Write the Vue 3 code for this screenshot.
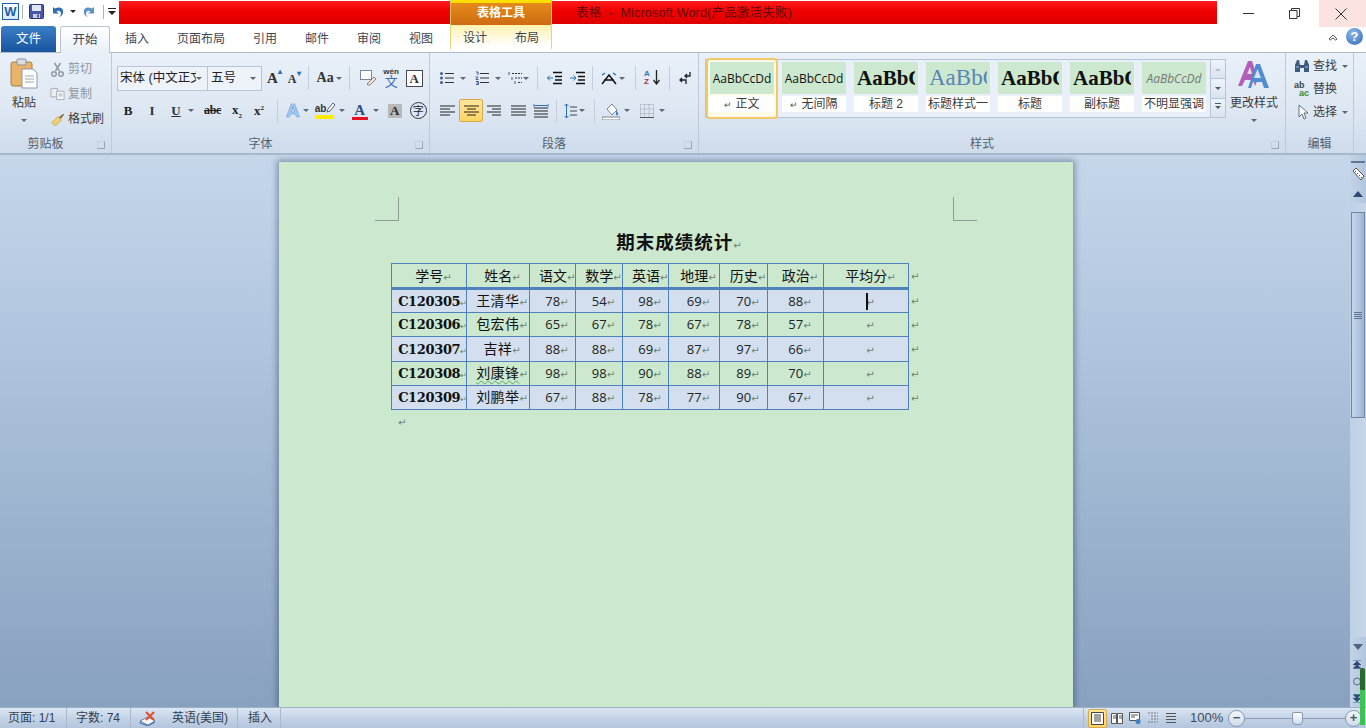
<script setup>
const cols = [75, 63, 46, 47, 46, 51, 48, 56, 85, 22]
const head = ['学号', '姓名', '语文', '数学', '英语', '地理', '历史', '政治', '平均分']
const rows = [
  ['C120305', '王清华', 78, 54, 98, 69, 70, 88],
  ['C120306', '包宏伟', 65, 67, 78, 67, 78, 57],
  ['C120307', '吉祥', 88, 88, 69, 87, 97, 66],
  ['C120308', '刘康锋', 98, 98, 90, 88, 89, 70],
  ['C120309', '刘鹏举', 67, 88, 78, 77, 90, 67],
]
const styles = [
  { kind: 'body', sample: 'AaBbCcDd', name: '正文', mark: true, active: true },
  { kind: 'body', sample: 'AaBbCcDd', name: '无间隔', mark: true },
  { kind: 'head', sample: 'AaBbC', name: '标题 2' },
  { kind: 'light', sample: 'AaBbC', name: '标题样式一' },
  { kind: 'head', sample: 'AaBbC', name: '标题' },
  { kind: 'head', sample: 'AaBbC', name: '副标题' },
  { kind: 'subtle', sample: 'AaBbCcDd', name: '不明显强调' },
]
const tabs = ['插入', '页面布局', '引用', '邮件', '审阅', '视图']
</script>

<template>
  <div class="word">
    <header class="titlebar">
      <div class="qat">
        <span class="logo">W</span>
        <i class="qsep"></i>
        <svg class="save" width="15" height="15" viewBox="0 0 15 15"><rect x=".5" y=".5" width="14" height="14" rx="1" fill="#4a58a8" stroke="#2c3577"/><rect x="3" y="1" width="9" height="6" fill="#dfe6f5"/><rect x="4" y="10" width="7" height="4" fill="#c8cfe0"/><rect x="8" y="10.5" width="2" height="3" fill="#4a58a8"/></svg>
        <svg class="undo" width="13" height="13" viewBox="0 0 13 13"><path d="M3 3.500c5-2.500 9 0 8 4.500-.4 2-2 3.500-4 4 1.800-1.500 2.300-3 1.800-4.500C8 5.500 5.800 5.200 4.500 6.500L7 8.500H1V2z" fill="#2f6fb5"/></svg>
        <i class="caret dark undo-caret"></i>
        <svg class="redo" width="13" height="13" viewBox="0 0 13 13"><path d="M10 3.500C5 1 1 3.500 2 8c.4 2 2 3.500 4 4-1.800-1.500-2.300-3-1.800-4.500C5 5.500 7.200 5.200 8.500 6.500L6 8.500h6V2z" fill="#5b93c9"/></svg>
        <i class="qsep redo-sep"></i>
        <svg class="qmenu" width="8" height="9" viewBox="0 0 8 9"><path d="M0 1h8v1H0zM0 4h8L4 8z" fill="#222"/></svg>
      </div>
      <div class="redband">
        <div class="ctx-title"><i></i><b>表格工具</b></div>
        <span class="doc-title">表格 &nbsp;-&nbsp; Microsoft Word(产品激活失败)</span>
      </div>
      <div class="winbtns">
        <span class="win"><svg width="11" height="11" viewBox="0 0 11 11"><path d="M0 5.500h11" stroke="#333"/></svg></span>
        <span class="win"><svg width="11" height="11" viewBox="0 0 11 11"><path d="M.5 2.500h7.500v8H.5zM2.500 2.500v-2h8v8h-2.500" fill="none" stroke="#333"/></svg></span>
        <span class="win close"><svg width="12" height="12" viewBox="0 0 12 12"><path d="M.5.500l11 11M11.500.500l-11 11" stroke="#333"/></svg></span>
      </div>
    </header>

    <nav class="tabs">
      <span class="tab-file">文件</span>
      <span class="tab-home">开始</span>
      <span v-for="t in tabs" :key="t" class="tab">{{ t }}</span>
      <div class="ctx-tabs"><span>设计</span><span>布局</span></div>
      <div class="tab-right">
        <svg width="10" height="8" viewBox="0 0 10 8"><path d="M1 6l4-4 4 4-1.500 1L5 5 2.500 7z" fill="none" stroke="#555"/></svg>
        <span class="help">?</span>
      </div>
    </nav>

    <section class="ribbon">
      <!-- 剪贴板 -->
      <div class="group g-clip">
        <div class="group-body clip-body">
          <div class="bigbtn paste">
            <svg width="28" height="31" viewBox="0 0 28 31"><rect x="1" y="4" width="21" height="24" rx="2" fill="#e9b36a" stroke="#a7804a"/><rect x="7" y="1" width="9" height="6" rx="1" fill="#d9dde3" stroke="#8b8f96"/><path d="M12 11h11l4 4v15H12z" fill="#fff" stroke="#8d97a5"/><path d="M15 18h9M15 21h9M15 24h9" stroke="#9aa5b5"/></svg>
            <span class="big-label">粘贴</span>
            <i class="caret"></i>
          </div>
          <div class="clip-list">
            <div class="line off"><svg width="14" height="15" viewBox="0 0 14 15"><path d="M4 1l5 8M10 1L5 9" stroke="#8f98a5" stroke-width="1.500"/><circle cx="3.500" cy="12" r="2.300" fill="none" stroke="#8f98a5" stroke-width="1.500"/><circle cx="10.500" cy="12" r="2.300" fill="none" stroke="#8f98a5" stroke-width="1.500"/></svg>剪切</div>
            <div class="line off"><svg width="16" height="14" viewBox="0 0 16 14"><path d="M1 1h7v9H1z" fill="#eee" stroke="#a5acb6"/><path d="M7 4h8v9H7z" fill="#f6f6f6" stroke="#a5acb6"/><path d="M9 7h4M9 9h4" stroke="#a5acb6"/></svg>复制</div>
            <div class="line"><svg width="17" height="15" viewBox="0 0 17 15"><path d="M10 5l5-4 1 1-4 5z" fill="#8a6a3a"/><path d="M2 11l7-7 4 4-6 6c-2 .5-4-1-5-3z" fill="#f1cf6b" stroke="#a98a3c" stroke-width=".6"/></svg>格式刷</div>
          </div>
        </div>
        <div class="group-label">剪贴板<i class="launch"></i></div>
      </div>

      <!-- 字体 -->
      <div class="group g-font">
        <div class="group-body">
          <div class="row font-top">
            <span class="combo face"><span class="combo-text">宋体 (中文正文)</span><i class="caret"></i></span>
            <span class="combo size"><span class="combo-text">五号</span><i class="caret"></i></span>
            <span class="glyph-a grow">A<sup>▴</sup></span>
            <span class="glyph-a shrink">A<sup>▾</sup></span>
            <i class="sep s-a"></i>
            <span class="aa">Aa</span><i class="caret"></i>
            <i class="sep s-b"></i>
            <svg class="clear" width="17" height="16" viewBox="0 0 17 16"><rect x=".5" y=".5" width="11" height="9" fill="#fff" stroke="#7b8796"/><path d="M7 14l7-7 2 2-6 6H8z" fill="#f6e2d5" stroke="#8b7f7a"/></svg>
            <span class="wen"><small>wén</small>文</span>
            <span class="boxa">A</span>
          </div>
          <div class="row font-bot">
            <b class="fmt serif f-b">B</b>
            <i class="fmt serif f-i">I</i>
            <u class="fmt serif f-u">U</u><i class="caret"></i>
            <s class="fmt serif f-s">abc</s>
            <span class="fmt serif f-x">x<sub>2</sub></span>
            <span class="fmt serif f-x2">x<sup>2</sup></span>
            <i class="sep s-c"></i>
            <span class="effect">A</span><i class="caret"></i>
            <span class="hl">ab<svg width="10" height="12" viewBox="0 0 10 12"><path d="M1 10l1-3 5-6 2 2-5 6z" fill="#fff" stroke="#55617a"/></svg></span><i class="caret"></i>
            <span class="red-a">A</span><i class="caret"></i>
            <span class="shade-a">A</span>
            <span class="ring">字</span>
          </div>
        </div>
        <div class="group-label">字体<i class="launch"></i></div>
      </div>

      <!-- 段落 -->
      <div class="group g-para">
        <div class="group-body">
          <div class="row para-top">
            <svg width="14" height="14" viewBox="0 0 14 14"><path d="M5 2.500h9M5 7h9M5 11.500h9" stroke="#333"/><circle cx="1.500" cy="2.500" r="1.500" fill="#3d5f8f"/><circle cx="1.500" cy="7" r="1.500" fill="#3d5f8f"/><circle cx="1.500" cy="11.500" r="1.500" fill="#3d5f8f"/></svg><i class="caret c-a"></i>
            <svg class="pa" width="14" height="14" viewBox="0 0 14 14"><path d="M5 2.500h9M5 7h9M5 11.500h9" stroke="#333"/><path d="M1 1h2v3M.500 6h2.500L1 8.500h2.500M1 10.500h2.500v3H1M1.500 12h2" fill="none" stroke="#3d5f8f"/></svg><i class="caret c-a"></i>
            <svg class="pb" width="14" height="14" viewBox="0 0 14 14"><path d="M4 2.500h10M7 7h7M10 11.500h4" stroke="#333" stroke-dasharray="2 1"/><path d="M1 1v3M4 6v3M7 10v3" stroke="#3d5f8f"/></svg><i class="caret c-b"></i>
            <i class="sep s-d"></i>
            <svg class="pc" width="15" height="14" viewBox="0 0 15 14"><path d="M6 1.500h9M8 5.500h7M8 9h7M6 12.500h9" stroke="#111" stroke-width="1.500"/><path d="M6 7H0M3 4.500L.500 7 3 9.500" fill="none" stroke="#2f6fb5"/></svg>
            <svg class="pd" width="15" height="14" viewBox="0 0 15 14"><path d="M6 1.500h9M8 5.500h7M8 9h7M6 12.500h9" stroke="#111" stroke-width="1.500"/><path d="M0 7h6M3.500 4.500L6 7 3.500 9.500" fill="none" stroke="#2f6fb5"/></svg>
            <i class="sep s-e"></i>
            <svg class="pe" width="16" height="14" viewBox="0 0 16 14"><path d="M1 13L8 4l7 9M3 9h10" fill="none" stroke="#111" stroke-width="1.500"/><path d="M4 2L1 4M12 2l3 2" stroke="#2f6fb5" stroke-width="1.500"/></svg><i class="caret c-c"></i>
            <i class="sep s-f"></i>
            <span class="sort"><small class="za">A</small><small class="zz">Z</small><svg width="7" height="15" viewBox="0 0 7 15"><path d="M3.500 0v13M.500 10l3 4 3-4" fill="none" stroke="#222" stroke-width="1.300"/></svg></span>
            <i class="sep s-g"></i>
            <svg class="pf" width="13" height="14" viewBox="0 0 13 14"><path d="M11 1v4H6M8 3L6 5l2 2M1 9h6v4M3 7l-2 2 2 2" fill="none" stroke="#222" stroke-width="1.300"/></svg>
          </div>
          <div class="row para-bot">
            <svg width="15" height="12" viewBox="0 0 15 12"><path d="M0 1h15M0 4h10M0 7h15M0 10h10" stroke="#222"/></svg>
            <span class="active-align"><svg width="15" height="12" viewBox="0 0 15 12"><path d="M0 1h15M3 4h9M0 7h15M3 10h9" stroke="#222"/></svg></span>
            <svg class="qa" width="14" height="12" viewBox="0 0 14 12"><path d="M0 1h14M5 4h9M0 7h14M5 10h9" stroke="#222"/></svg>
            <svg class="qb" width="15" height="12" viewBox="0 0 15 12"><path d="M0 1h15M0 4h15M0 7h15M0 10h15" stroke="#222"/></svg>
            <svg class="qc" width="16" height="16" viewBox="0 0 16 16"><path d="M1 5h14M1 8h14M1 11h14M1 14h14" stroke="#222"/><path d="M1 1v3M15 1v3M2 2.500h12" stroke="#2f6fb5"/></svg>
            <i class="sep s-h"></i>
            <svg class="qd" width="13" height="16" viewBox="0 0 13 16"><path d="M6 4h7M6 8h7M6 12h7" stroke="#444"/><path d="M2.500 1v14M.500 3l2-2 2 2M.500 13l2 2 2-2" fill="none" stroke="#2f6fb5"/></svg><i class="caret c-d"></i>
            <i class="sep s-i"></i>
            <svg class="qe" width="18" height="18" viewBox="0 0 18 18"><path d="M5 7l5-5 5 6-5 5z" fill="#fff" stroke="#7a8594"/><path d="M14 8c1 2 3 3 2 5-1 1-2 0-2-1z" fill="#3d7fc0"/><path d="M0 15h18v3H0z" fill="#fff" stroke="#7a8594"/></svg><i class="caret c-e"></i>
            <svg class="qf" width="14" height="14" viewBox="0 0 14 14"><path d="M.5.500h13v13H.500zM4.500.500v13M9 .500v13M.500 5h13M.500 9.500h13" fill="none" stroke="#9aa5b3" stroke-dasharray="1 1"/><path d="M0 13.500h14" stroke="#555"/></svg><i class="caret c-f"></i>
          </div>
        </div>
        <div class="group-label">段落<i class="launch"></i></div>
      </div>

      <!-- 样式 -->
      <div class="group g-styles">
        <div class="group-body styles-body">
          <div class="gallery">
            <div v-for="s in styles" :key="s.name" class="style-item" :class="{ active: s.active }">
              <div class="sample" :class="s.kind"><span>{{ s.sample }}</span></div>
              <div class="style-name"><em v-if="s.mark">↵</em>{{ s.name }}</div>
            </div>
            <div class="gal-scroll">
              <span><i class="tri up"></i></span>
              <span><i class="tri"></i></span>
              <span><i class="tri bar"></i></span>
            </div>
          </div>
          <div class="bigbtn change">
            <svg width="34" height="32" viewBox="0 0 34 32"><path d="M1 27L11 2h4l6 18-3 7-2-6H8l-3 6z" fill="#b25fb8"/><path d="M10 15h5l-2-7z" fill="#e6d7ea"/><path d="M11 29L19 5h4l9 24h-5l-2-6h-9l-2 6z" fill="#4f8cd0"/><path d="M17 19h7l-3.500-9z" fill="#d5e4f5"/></svg>
            <span class="big-label">更改样式</span>
            <i class="caret"></i>
          </div>
        </div>
        <div class="group-label">样式<i class="launch"></i></div>
      </div>

      <!-- 编辑 -->
      <div class="group g-edit">
        <div class="group-body edit-body">
          <div class="line"><svg width="16" height="14" viewBox="0 0 16 14"><path d="M1 13V6l2-5h2l1 5v7zM10 13V6l1-5h2l2 5v7zM6 6h4v3H6z" fill="#3e5a80"/><path d="M2 8h3M11 8h3" stroke="#a9c3e2"/></svg>查找<i class="caret"></i></div>
          <div class="line"><span class="abac"><small>ab</small><b>ac</b></span>替换</div>
          <div class="line"><svg width="16" height="16" viewBox="0 0 16 16"><path d="M5 1v12l3-3 2 5 2-1-2-5h4z" fill="#fff" stroke="#5f6e80"/></svg>选择<i class="caret"></i></div>
        </div>
        <div class="group-label">编辑</div>
      </div>
    </section>

    <main class="doc">
      <div class="doc-scroll">
        <div class="page">
          <div class="marks"><i class="mark-l"></i><i class="mark-r"></i></div>
          <h1 class="doc-h">期末成绩统计<em class="ret">↵</em></h1>
          <table class="score">
            <colgroup><col v-for="(c, i) in cols" :key="i" :width="c"></colgroup>
            <thead>
              <tr>
                <th v-for="h in head" :key="h">{{ h }}<em class="ret">↵</em></th>
                <td class="end"><em class="ret">↵</em></td>
              </tr>
            </thead>
            <tbody>
              <tr v-for="(r, ri) in rows" :key="r[0]" :class="{ band: ri % 2 === 0 }">
                <td class="sid">{{ r[0] }}<em class="ret">↵</em></td>
                <td class="sname"><span :class="{ wavy: r[1] === '刘康锋' }">{{ r[1] }}</span><em class="ret">↵</em></td>
                <td v-for="(n, ni) in r.slice(2)" :key="ni" class="num">{{ n }}<em class="ret">↵</em></td>
                <td class="num avg"><i v-if="ri === 0" class="textcursor"></i><em class="ret">↵</em></td>
                <td class="end"><em class="ret">↵</em></td>
              </tr>
            </tbody>
          </table>
          <p class="after"><em class="ret">↵</em></p>
        </div>
      </div>
      <aside class="vbar">
        <i class="split"></i>
        <span class="ruler-btn"><svg width="13" height="14" viewBox="0 0 13 14"><path d="M1 4l3-3 8 8-3 4z" fill="#fff" stroke="#555"/><path d="M3 5l1-1M5 7l1-1M7 9l1-1M9 11l1-1" stroke="#555"/></svg></span>
        <span class="vbtn"><i class="tri up big"></i></span>
        <div class="track">
          <div class="thumb"><i class="grip"></i></div>
        </div>
        <span class="vbtn"><i class="tri big"></i></span>
        <span class="vnav"><svg width="8" height="9" viewBox="0 0 8 9"><path d="M0 .5h8M4 1l4 4H0zM4 4.500l4 4H0z" fill="#2e4a72" stroke="#2e4a72" stroke-width=".4"/></svg></span>
        <span class="vnav"><svg width="8" height="9" viewBox="0 0 8 9"><circle cx="4" cy="4.500" r="3.500" fill="none" stroke="#55697f"/></svg></span>
        <span class="vnav"><svg width="8" height="9" viewBox="0 0 8 9"><path d="M0 8.500h8M4 8L0 4h8zM4 4.500L0 .5h8z" fill="#2e4a72" stroke="#2e4a72" stroke-width=".4"/></svg></span>
      </aside>
    </main>

    <footer class="status">
      <span class="st st-page">页面: 1/1</span>
      <span class="st st-words">字数: 74</span>
      <span class="st st-proof"><svg width="18" height="15" viewBox="0 0 18 15"><path d="M1 10l8-4 7 4-7 4z" fill="#fff" stroke="#5b7fa8"/><path d="M1 11v1l8 3 7-4" fill="none" stroke="#3d6aa0"/><path d="M7 1l8 8M15 1L7 9" stroke="#e0512f" stroke-width="2.200"/></svg></span>
      <span class="st st-lang">英语(美国)</span>
      <span class="st st-ins">插入</span>
      <div class="st-right">
        <span class="view on"><svg width="13" height="13" viewBox="0 0 13 13"><path d="M.5.500h12v12H.500z" fill="#fff" stroke="#444"/><path d="M3 3h7M3 5h7M3 7h7M3 9h7" stroke="#444"/></svg></span>
        <span class="view"><svg width="12" height="12" viewBox="0 0 12 12"><path d="M.5 1.500h5v10h-5zM6.500 1.500h5v10h-5z" fill="#fff" stroke="#555"/><path d="M2 4h3M2 6h3M8 4h3M8 6h3" stroke="#555"/></svg></span>
        <span class="view"><svg width="12" height="12" viewBox="0 0 12 12"><path d="M.5.500h10v8H.500z" fill="#fff" stroke="#555"/><path d="M2 3h7M2 5h4" stroke="#555"/><circle cx="9" cy="9.500" r="2.500" fill="#3d7fc0"/></svg></span>
        <span class="view"><svg width="12" height="12" viewBox="0 0 12 12"><path d="M1 1h10M4 4h7M4 7h7M1 10h10" stroke="#777" stroke-dasharray="2 1"/></svg></span>
        <span class="view"><svg width="12" height="12" viewBox="0 0 12 12"><path d="M1 1.500h10M1 4.500h10M1 7.500h10M1 10.500h10" stroke="#555"/></svg></span>
        <span class="zoom-pct">100%</span>
        <span class="zbtn">−</span>
        <div class="zoom-track"><i class="zoom-thumb"></i></div>
        <span class="zbtn plus">+</span>
      </div>
    </footer>
    <i class="green-edge"></i>
  </div>
</template>

<style scoped>
.word {
  position: relative;
  width: 1366px;
  height: 728px;
  overflow: hidden;
  display: flex;
  flex-direction: column;
  background: #fff;
  font: 12px/1.2 "Liberation Sans", "Noto Sans CJK SC", sans-serif;
  color: #3c3c3c;
}
i, em { font-style: normal; }
svg { flex: none; display: block; }

/* title bar */
.titlebar { height: 25px; display: flex; flex: none; }
.qat { width: 119px; display: flex; align-items: center; padding: 0 0 2px 2px; box-sizing: border-box; }
.logo {
  width: 15px; height: 15px; border: 1px solid #1d5fa8; background: linear-gradient(#fff, #d7e7f7);
  color: #1d5fa8; font-weight: bold; font-size: 13px; line-height: 15px; text-align: center;
}
.qsep { width: 1px; height: 14px; background: #aab4c0; margin-left: 3px; }
.save { margin-left: 6px; }
.undo { margin-left: 8px; }
.undo-caret { margin-left: 5px; }
.redo { margin-left: 6px; }
.redo-sep { margin-left: 8px; }
.qmenu { margin-left: 4px; }
.redband {
  flex: none; width: 1098px; height: 23px; margin-top: 1px; position: relative;
  background: linear-gradient(#ff1c1c, #f00000 45%, #dd0000);
  display: flex;
}
.ctx-title {
  width: 102px; margin: -1px 0 0 331px; height: 25px; flex: none;
  background: linear-gradient(#e98f1a, #cc6b12);
  border-left: 1px solid #e6c36a; border-right: 1px solid #e6c36a; box-sizing: border-box;
  text-align: center; color: #fff; font-size: 12px;
}
.ctx-title i { display: block; height: 3px; background: #ffdf00; margin-bottom: 3px; }
.doc-title { margin-left: 24px; line-height: 24px; color: #5e0b0b; font-size: 12.5px; letter-spacing: .2px; white-space: nowrap; }
.winbtns { flex: 1; display: flex; justify-content: flex-end; }
.win { width: 46px; height: 27px; display: flex; align-items: center; justify-content: center; padding-right: 3px; box-sizing: border-box; }
.close { background: #fbe3e1; width: 47px; }

/* tabs */
.tabs { height: 28px; flex: none; display: flex; align-items: flex-end; position: relative; border-bottom: 1px solid #aebccd; box-sizing: border-box; }
.tab-file {
  width: 55px; height: 26px; margin-left: 1px; line-height: 26px; text-align: center; color: #fff; font-size: 12.5px;
  background: linear-gradient(#3a7fc6, #19559f); border-radius: 3px 3px 0 0; box-sizing: border-box;
}
.tab-home {
  width: 50px; height: 27px; margin: 0 15px -1px 4px; line-height: 26px; text-align: center; font-size: 12.5px; color: #3c4656;
  background: linear-gradient(#fff, #eaf0f8); border: 1px solid #b6c3d3; border-bottom: none; border-radius: 3px 3px 0 0; box-sizing: border-box;
}
.tab { padding-right: 28px; line-height: 26px; color: #3c4656; font-size: 12px; }
.ctx-tabs {
  position: absolute; left: 450px; top: 0; width: 102px; height: 24px; padding-top: 1px;
  background: linear-gradient(#fff2b0, #fff 90%); border-left: 1px solid #e6d27f; border-right: 1px solid #e6d27f; box-sizing: border-box;
  display: flex; gap: 28px; justify-content: center; line-height: 24px; color: #3c4656;
}
.tab-right { position: absolute; right: 3px; top: 3px; display: flex; align-items: center; gap: 8px; }
.help {
  width: 17px; height: 17px; border-radius: 50%; background: radial-gradient(circle at 40% 30%, #8fb8e8, #2a69b8);
  color: #fff; font-weight: bold; font-size: 13px; line-height: 17px; text-align: center;
}

/* ribbon */
.ribbon {
  height: 102px; flex: none; display: flex;
  background: linear-gradient(#e9f0f8, #dde7f3 60%, #cedbeb);
  border-bottom: 2px solid #a8b8cc; box-sizing: border-box;
}
.group { display: flex; flex-direction: column; border-right: 1px solid #bccada; box-sizing: border-box; }
.group-body { height: 83px; box-sizing: border-box; }
.group-label {
  height: 17px; text-align: center; position: relative; color: #555f6e; line-height: 16px; padding-right: 20px;
}
.launch {
  position: absolute; right: 6px; top: 5px; width: 6px; height: 6px; border: 1px solid #9aa6b5; border-top-color: #c6d0dc; border-left-color: #c6d0dc;
}
.caret { width: 0; height: 0; flex: none; border: 3px solid transparent; border-top: 3px solid #5e6875; border-bottom: none; display: block; }
.caret.dark { border-top-color: #222; }
.sep { width: 1px; height: 24px; background: #c3cfdd; flex: none; display: block; }
.row { display: flex; align-items: center; }

.g-clip { width: 112px; }
.clip-body { display: flex; padding: 5px 0 0 9px; }
.bigbtn { display: flex; flex-direction: column; align-items: center; }
.paste { width: 30px; }
.big-label { margin-top: 7px; white-space: nowrap; color: #3c3c3c; line-height: 15px; }
.bigbtn .caret { margin-top: 8px; }
.clip-list { margin: 2px 0 0 11px; display: flex; flex-direction: column; gap: 7px; }
.clip-list svg { width: 15px; }
.line { height: 18px; display: flex; align-items: center; gap: 3px; white-space: nowrap; }
.off { color: #8d96a3; }

.g-font { width: 318px; }
.font-top { height: 26px; margin: 12px 0 0 5px; }
.combo {
  height: 25px; display: flex; align-items: center; box-sizing: border-box; border: 1px solid #b7c5d6; background: #eef3fa; padding: 0 5px 0 2px; font-size: 12.5px; color: #222;
}
.face { width: 91px; }
.size { width: 54px; border-left: none; padding-left: 3px; }
.combo-text { flex: 1; overflow: hidden; white-space: nowrap; }
.glyph-a { font: bold 15px "Liberation Serif", serif; color: #333; display: flex; }
.glyph-a sup { font-size: 8px; color: #2f6fb5; margin: -3px 0 0 0; }
.grow { margin-left: 5px; }
.shrink { margin-left: 6px; font-size: 12px; padding-top: 3px; }
.s-a { margin-left: 7px; }
.aa { margin-left: 8px; font: bold 14px "Liberation Serif", serif; color: #333; margin-right: 2px; }
.s-b { margin-left: 7px; }
.clear { margin-left: 10px; }
.wen { margin-left: 6px; width: 17px; font-size: 13px; line-height: 13px; color: #3f6fae; text-align: center; height: 20px; }
.wen small { display: block; font: bold 8px/7px "Liberation Sans", sans-serif; color: #333; }
.boxa { margin-left: 6px; width: 15px; height: 15px; border: 1px solid #445; background: #fff; font: bold 13px/15px "Liberation Serif", serif; text-align: center; color: #333; }
.font-bot { height: 23px; margin: 8px 0 0 10px; }
.fmt { font-size: 13px; color: #222; font-weight: bold; }
.serif { font-family: "Liberation Serif", serif; }
.f-b { width: 12px; text-align: center; }
.f-i { width: 12px; margin-left: 12px; text-align: center; color: #333; }
.f-u { width: 12px; margin: 0 6px 0 12px; text-align: center; color: #2a3345; }
.f-s { margin-left: 10px; width: 19px; font-size: 12px; letter-spacing: -.3px; }
.f-x { margin-left: 9px; width: 15px; }
.f-x2 { margin-left: 7px; width: 15px; }
.f-x sub, .f-x2 sup { font-size: 7px; }
.s-c { margin-left: 8px; }
.effect { margin: 0 3px 0 8px; font: bold 19px "Liberation Sans", sans-serif; color: #a9cdf2; -webkit-text-stroke: .6px #5a95d5; }
.hl { margin: 0 5px 0 6px; width: 19px; height: 17px; display: flex; font: bold 10px/13px "Liberation Sans", sans-serif; border-bottom: 4px solid #ffec00; color: #333; box-sizing: border-box; }
.red-a { margin: 0 5px 0 7px; width: 16px; height: 18px; border-bottom: 3px solid #e81123; text-align: center; font: bold 15px/16px "Liberation Serif", serif; color: #2f4c86; box-sizing: border-box; }
.shade-a { margin-left: 9px; width: 14px; height: 14px; background: #b8b8b8; text-align: center; font: bold 13px/14px "Liberation Serif", serif; color: #2b2b2b; }
.ring { margin-left: 8px; width: 15px; height: 15px; border: 1px solid #333; border-radius: 50%; font: 11px/15px "Noto Sans CJK SC", sans-serif; text-align: center; color: #222; }

.g-para { width: 269px; }
.para-top { height: 26px; margin: 12px 0 0 10px; }
.c-a { margin-left: 6px; }
.pa { margin-left: 9px; }
.pb { margin-left: 7px; }
.c-b { margin-left: 1px; }
.s-d { margin-left: 8px; }
.pc { margin-left: 9px; }
.pd { margin-left: 8px; }
.s-e { margin-left: 7px; }
.pe { margin-left: 8px; }
.c-c { margin-left: 2px; }
.s-f { margin-left: 10px; }
.sort { margin-left: 8px; width: 16px; height: 16px; position: relative; display: flex; justify-content: flex-end; }
.sort small { position: absolute; left: 0; font: bold 8px/8px "Liberation Sans", sans-serif; color: #3f6fae; }
.za { top: 0; }
.zz { top: 8px; color: #a03a3a !important; }
.s-g { margin-left: 9px; }
.pf { margin-left: 9px; }
.para-bot { height: 23px; margin: 8px 0 0 10px; }
.active-align {
  margin-left: 4px; width: 24px; height: 23px; display: flex; align-items: center; justify-content: center; box-sizing: border-box;
  background: linear-gradient(#ffe79a, #ffd463); border: 1px solid #d9a94b; border-radius: 2px;
}
.qa { margin-left: 4px; }
.qb { margin-left: 10px; }
.qc { margin-left: 7px; }
.s-h { margin-left: 7px; }
.qd { margin-left: 7px; }
.c-d { margin-left: 2px; }
.s-i { margin-left: 9px; }
.qe { margin-left: 7px; }
.c-e { margin-left: 4px; }
.qf { margin-left: 10px; }
.c-f { margin-left: 5px; }

.g-styles { width: 587px; }
.styles-body { display: flex; padding: 6px 0 0 6px; }
.gallery {
  width: 521px; height: 59px; display: flex; gap: 4px; padding: 0 0 0 2px; box-sizing: border-box;
  border: 1px solid #b5c4d6; background: #e9f0f9; position: relative;
}
.style-item { width: 68px; height: 57px; padding: 2px 2px 0; box-sizing: border-box; flex: none; }
.style-item.active { outline: 2px solid #f2c869; outline-offset: 0; border-radius: 2px; background: #fffbe9; }
.sample {
  height: 32px; background: #cce8cf; overflow: hidden; white-space: nowrap; text-align: center; display: flex; align-items: center; justify-content: center;
  color: #111;
}
.sample.body { font: 12px "Open Sans", sans-serif; }
.sample.head { font: bold 21px "Liberation Serif", serif; justify-content: flex-start; padding-left: 3px; }
.sample.light { font: 23px "Liberation Serif", serif; color: #5b83b5; justify-content: flex-start; padding-left: 3px; }
.sample.head span, .sample.light span { display: block; width: 58px; overflow: hidden; text-align: left; }
.sample.subtle { font: italic 12px "Open Sans", sans-serif; color: #777; }
.style-name { height: 16px; margin-top: 2px; background: #fff; line-height: 16px; text-align: center; color: #3c3c3c; white-space: nowrap; overflow: hidden; }
.style-name em { font-size: 9px; margin-right: 3px; color: #555; }
.gal-scroll { position: absolute; right: 0; top: 0; width: 14px; height: 57px; display: flex; flex-direction: column; border-left: 1px solid #b5c4d6; }
.gal-scroll span { flex: 1; display: flex; align-items: center; justify-content: center; border-bottom: 1px solid #b5c4d6; background: linear-gradient(#eff4fa, #d9e3f0); }
.gal-scroll span:last-child { border-bottom: none; }
.tri { width: 0; height: 0; border: 3px solid transparent; border-top: 3px solid #4d5a6c; border-bottom: none; display: block; position: relative; }
.tri.up { border-top: none; border-bottom: 3px solid #b6c1cf; }
.tri.bar::before { content: ""; position: absolute; left: -3px; top: -6px; width: 6px; height: 1px; background: #4d5a6c; }
.change { width: 50px; margin-left: 3px; padding-top: 0; }
.change .big-label { margin-top: 5px; }

.g-edit { flex: 1; border-right: none; }
.edit-body { padding: 4px 0 0 8px; display: flex; flex-direction: column; gap: 5px; border-right: 1px solid #bccada; margin-right: 12px; }
.edit-body .line { gap: 3px; height: 18px; }
.edit-body .caret { margin-left: 2px; }
.abac { width: 16px; height: 16px; display: block; position: relative; font: bold 9px/8px "Liberation Sans", sans-serif; }
.abac small { font-size: 9px; color: #444; display: block; }
.abac b { color: #2e8b3d; display: block; margin-left: 5px; }
.g-edit .group-label { margin-right: 12px; padding-right: 0; border-right: 1px solid #bccada; }

/* document area */
.doc { flex: 1; display: flex; min-height: 0; background: linear-gradient(#c6d7ec, #a9bfd9 45%, #88a1bf); }
.doc-scroll { flex: 1; overflow: hidden; padding: 7px 0 0 2px; box-sizing: border-box; }
.page {
  width: 794px; height: 100%; margin: 0 auto; background: #cce8cf; box-shadow: 0 0 6px 2px rgba(30, 45, 70, .4); padding: 35px 96px 0; box-sizing: border-box;
  font-family: "Liberation Sans", "Noto Sans CJK SC", sans-serif;
}
.marks { display: flex; justify-content: space-between; }
.marks i { width: 24px; height: 24px; display: block; box-sizing: border-box; border-bottom: 1px solid #8d9d90; }
.mark-l { border-right: 1px solid #8d9d90; }
.mark-r { border-left: 1px solid #8d9d90; }
.doc-h { margin: 8px 0 9px; padding-left: 6px; height: 25px; font: bold 18.500px/25px "Noto Sans CJK SC", sans-serif; letter-spacing: 1px; color: #111; text-align: center; }
.ret { font: 400 10px/1 "DejaVu Sans", sans-serif; color: #6f7f72; letter-spacing: 0; }
.score { margin-left: 16px; width: 539px; table-layout: fixed; border-collapse: collapse; color: #111; }
.score th, .score td { border: 1px solid #4f81bd; padding: 0; text-align: center; white-space: nowrap; line-height: 1; height: 24px; box-sizing: border-box; }
.score th { height: 25px; padding: 0 0 0 9px; font: 400 14px/1 "Noto Sans CJK SC", sans-serif; border-bottom: 3px solid #4f81bd; }
.band td { background: #d3dfee; }
.score tbody tr:nth-child(3) td { height: 25px; }
.score .end { border: none; background: none; text-align: left; padding: 0 0 0 2px; }
.sid { font: bold 13px/1 "DejaVu Serif", serif !important; text-align: right !important; letter-spacing: -.35px; }
.sid .ret { font-size: 8px; margin-right: -1px; }
.score .sname { font: 400 14px/1 "Noto Sans CJK SC", sans-serif; letter-spacing: .4px; padding: 0 0 2px 8px; }
.wavy { text-decoration: underline wavy #59a869 1px; text-underline-offset: 2px; }
.score .num { font: 13px/1 "Open Sans", sans-serif; color: #222; padding-left: 9px; }
.avg { position: relative; }
.textcursor { position: absolute; left: 42px; top: 3px; width: 2px; height: 17px; background: #111; }
.after { margin: 5px 0 0 23px; line-height: 14px; }

/* scrollbar */
.vbar { width: 16px; flex: none; display: flex; flex-direction: column; align-items: stretch; background: linear-gradient(90deg, #c3d3e7, #b2c6de); }
.split { height: 2px; margin: 6px 1px 0; background: #5f7898; display: block; flex: none; }
.ruler-btn { height: 20px; display: flex; align-items: center; justify-content: center; flex: none; margin-top: 1px; }
.vbtn { height: 19px; display: flex; align-items: center; justify-content: center; flex: none; }
.tri.big { border-width: 5px; border-top: 6px solid #4d6485; border-bottom: none; }
.tri.up.big { border-top: none; border-bottom: 6px solid #2e4a72; }
.track { flex: 1; padding-top: 9px; background: linear-gradient(90deg, #bfd0e6, #c7d6e9); }
.thumb {
  height: 206px; margin: 0 1px; box-sizing: border-box; border: 1px solid #6f86a6; background: linear-gradient(90deg, #c6d7ec, #9db5d3);
  display: flex; align-items: center; justify-content: center;
}
.grip { width: 8px; height: 7px; background: repeating-linear-gradient(#5d7391 0 1px, transparent 1px 2px); display: block; }
.vnav { height: 17px; display: flex; align-items: center; justify-content: center; flex: none; padding-right: 2px; box-sizing: border-box; }

/* status bar */
.status {
  height: 21px; flex: none; display: flex; align-items: center; box-sizing: border-box;
  background: linear-gradient(#dbe6f3, #c2d1e5 55%, #b4c6dd); border-top: 1px solid #9eb0c6; color: #33404f;
}
.st { height: 100%; display: flex; align-items: center; box-sizing: border-box; border-right: 1px solid #a9b9cd; white-space: nowrap; }
.st-page { width: 67px; padding-left: 8px; }
.st-words { width: 64px; padding-left: 9px; }
.st-proof { width: 32px; padding-left: 8px; border-right: none; }
.st-lang { width: 75px; padding-left: 9px; }
.st-ins { width: 43px; padding-left: 10px; }
.st-right { margin-left: auto; display: flex; align-items: center; height: 100%; padding-right: 4px; box-sizing: border-box; border-left: 1px solid #a9b9cd; padding-left: 4px; }
.view { width: 18px; height: 19px; display: flex; align-items: center; justify-content: center; box-sizing: border-box; }
.view.on { width: 19px; background: linear-gradient(#ffe79a, #ffd463); border: 1px solid #d9a94b; border-radius: 2px; margin-right: 1px; }
.zoom-pct { margin-left: 10px; font-size: 13px; width: 32px; color: #3c4b5f; white-space: nowrap; }
.zbtn {
  width: 15px; height: 15px; border-radius: 50%; border: 1px solid #8497ae; margin-left: 6px; background: linear-gradient(#f4f7fb, #cfdbe9);
  font: bold 13px/14px "Liberation Sans", sans-serif; text-align: center; color: #44556b; flex: none;
}
.zoom-track { width: 100px; height: 1px; background: #8c9db3; position: relative; }
.zoom-thumb { position: absolute; left: 47px; top: -6px; width: 9px; height: 11px; background: linear-gradient(#fff, #cfdcec); border: 1px solid #8497ae; border-radius: 2px 2px 4px 4px; }
.plus { margin-left: 0; }
.green-edge {
  position: absolute; right: 1px; top: 668px; width: 5px; height: 57px; border-radius: 2px 2px 0 0; display: block;
  background: linear-gradient(#2a6a2c 0 38%, #3fc254 38% 100%);
}
</style>
